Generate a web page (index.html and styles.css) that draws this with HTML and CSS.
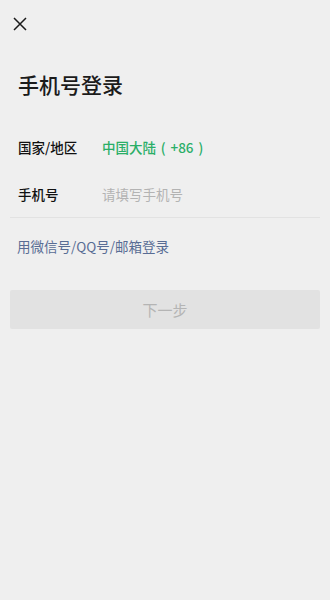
FILE: index.html
```html
<!DOCTYPE html>
<html lang="zh">
<head>
<meta charset="utf-8">
<link rel="stylesheet" href="styles.css">
</head>
<body>
<div class="page">
  <div class="topbar">
    <svg class="close" width="14" height="14" viewBox="0 0 14 14"><path d="M1 1L13 13M13 1L1 13" stroke="#1a1a1a" stroke-width="1.5" fill="none"/></svg>
  </div>
  <h1 class="title">手机号登录</h1>
  <div class="row">
    <span class="label">国家/地区</span>
    <span class="value green">中国大陆 ( +86 )</span>
  </div>
  <div class="row phone">
    <span class="label">手机号</span>
    <span class="value placeholder">请填写手机号</span>
  </div>
  <div class="alt">用微信号/QQ号/邮箱登录</div>
  <div class="btn">下一步</div>
</div>
</body>
</html>
```
FILE: styles.css
```css
html, body { margin: 0; padding: 0; background: #efefef; }
body { font-family: "Noto Sans CJK SC", "Noto Sans", sans-serif; width: 330px; height: 600px; }
.page { padding: 0 10px; }
.topbar { height: 48px; display: flex; align-items: flex-start; padding: 17px 0 0 3px; box-sizing: border-box; }
.close { display: block; }
.title { margin: 21px 0 0 8px; font-size: 21px; font-weight: 500; color: #1b1b1b; line-height: 30px; }
.row { display: flex; align-items: center; height: 46px; padding-left: 8px; font-size: 13.5px; }
.title + .row { margin-top: 25px; }
.label { width: 84px; color: #111; font-weight: 500; }
.green { color: #2aae67; font-weight: 500; word-spacing: 1.8px; }
.placeholder { color: #b3b3b3; }
.phone { border-bottom: 1px solid #e2e2e2; height: 47px; }
.alt { margin: 18px 0 0 7px; color: #586c94; font-size: 13.5px; line-height: 20px; }
.btn { margin-top: 34px; height: 39px; background: #e2e2e2; border-radius: 2px; color: #b4b4b4; font-size: 15px; display: flex; align-items: center; justify-content: center; }
```
